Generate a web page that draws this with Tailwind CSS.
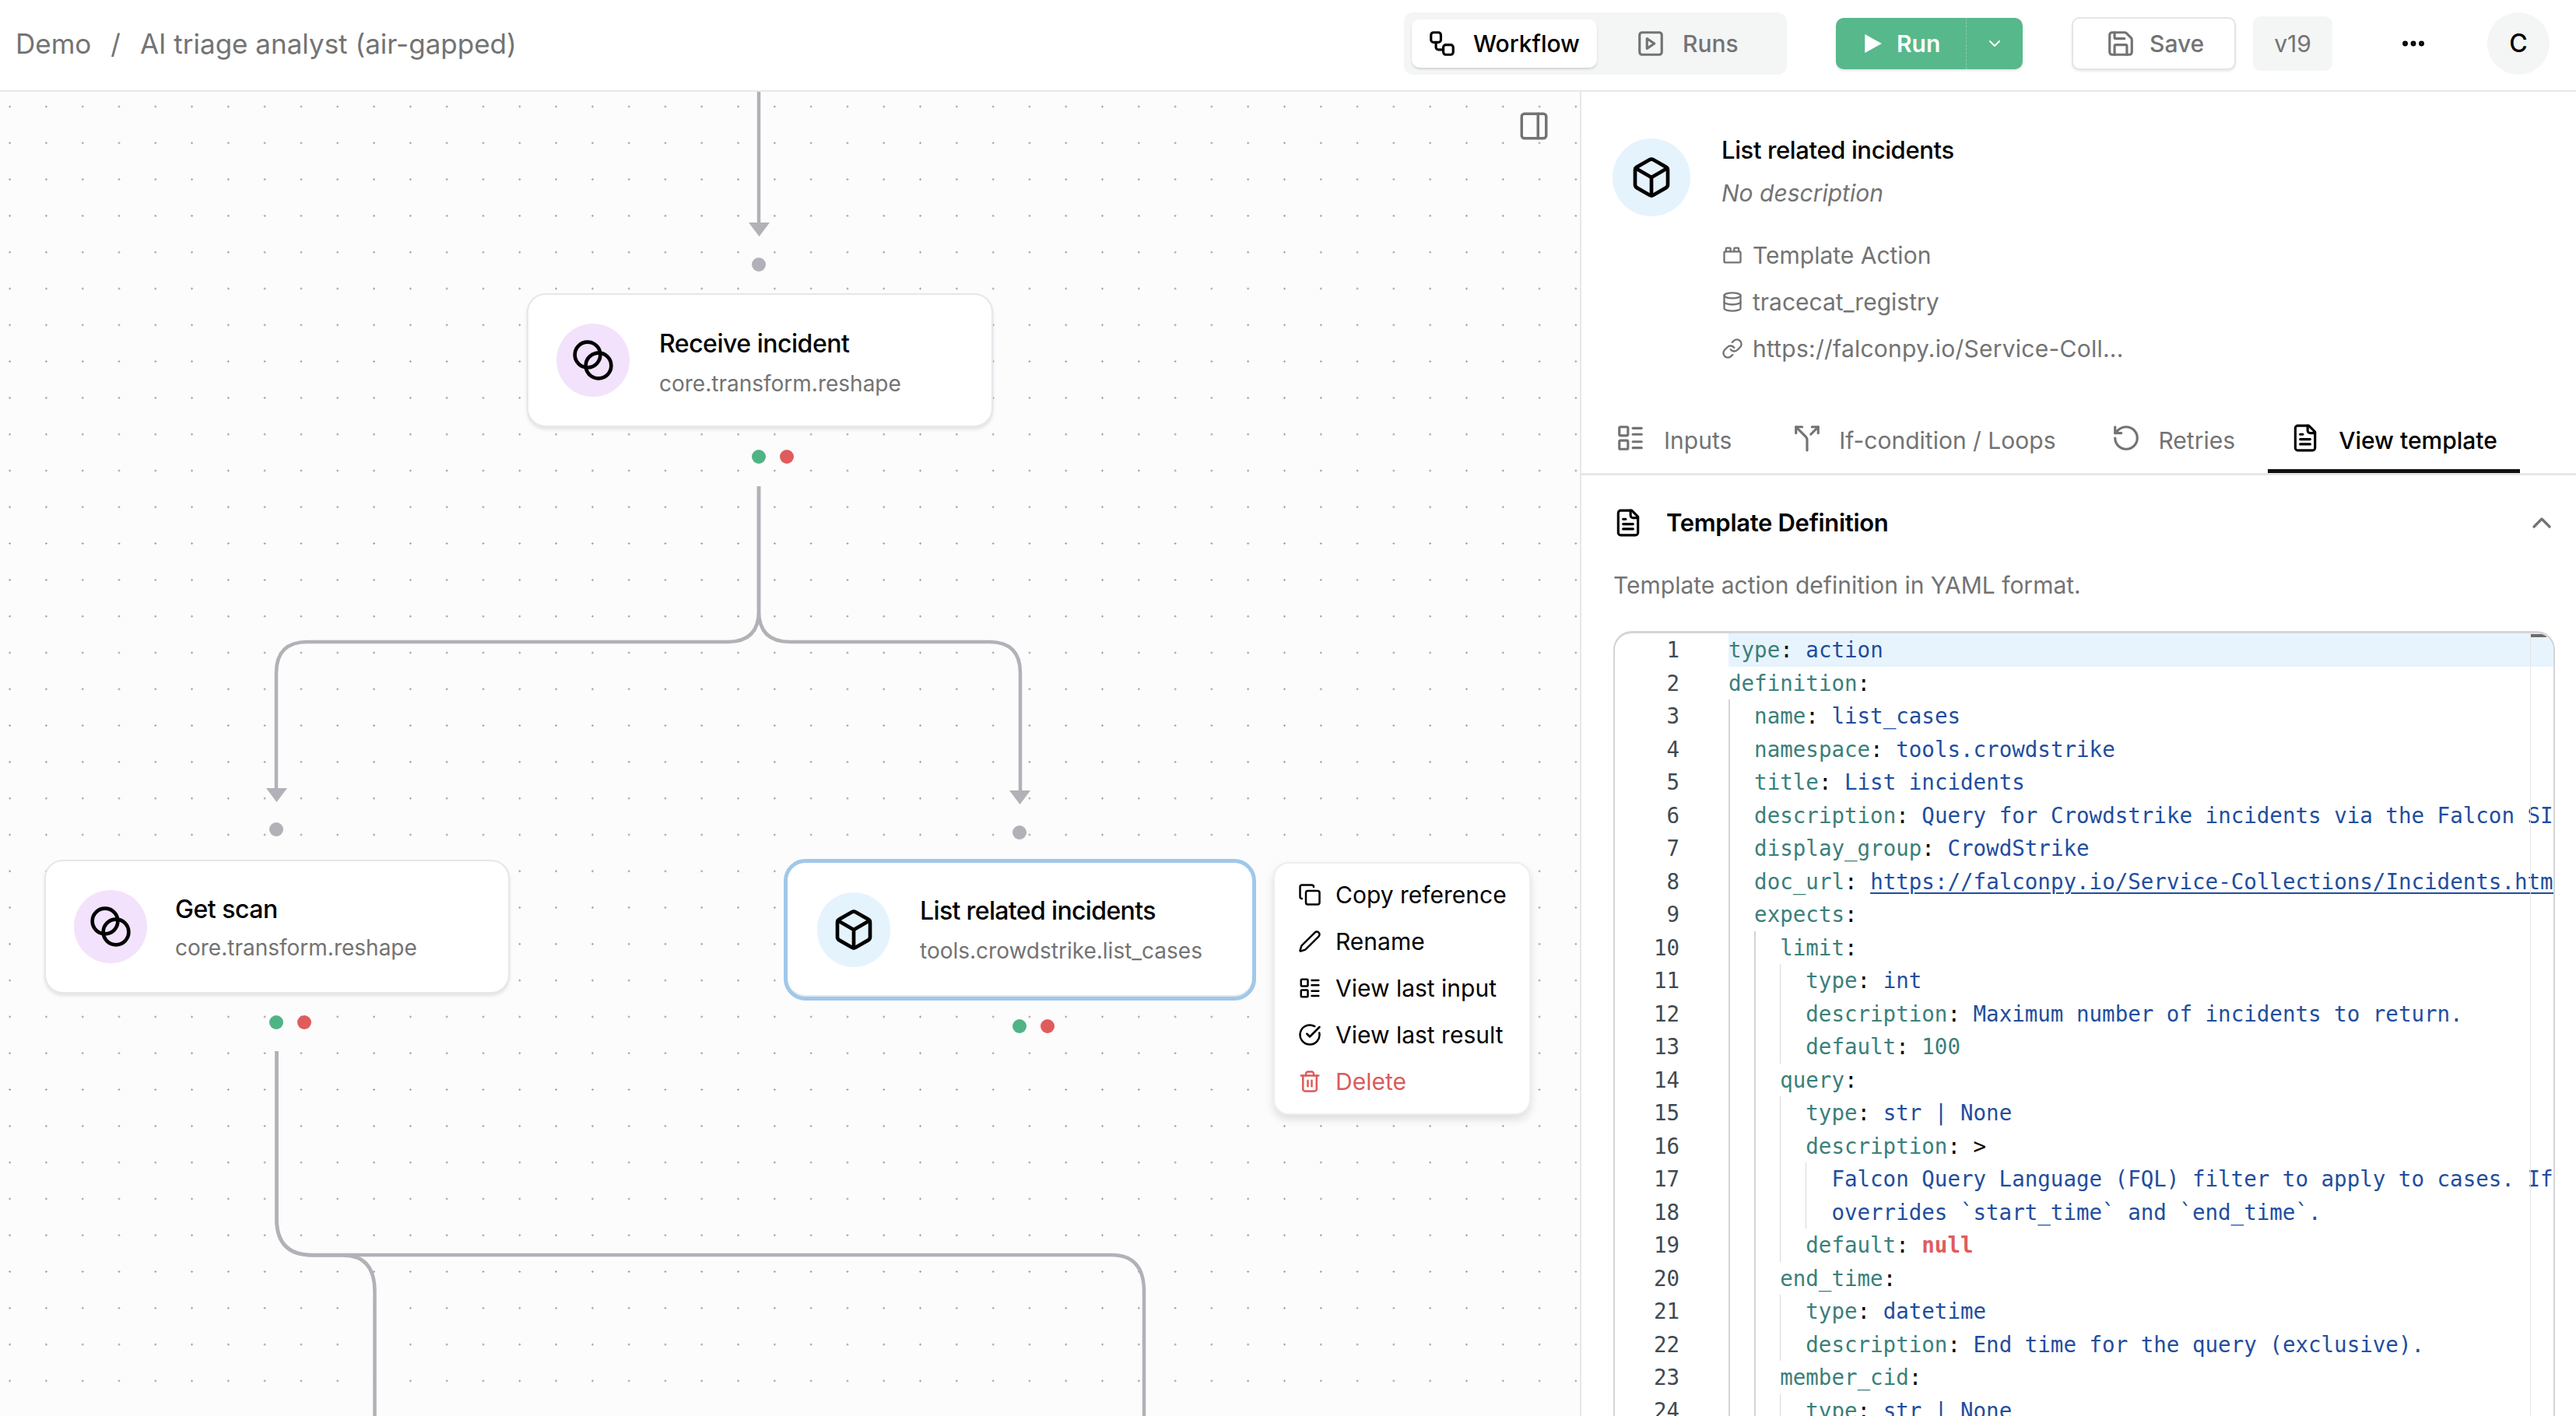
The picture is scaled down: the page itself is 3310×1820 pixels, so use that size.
<!doctype html>
<html>
<head>
<meta charset="utf-8">
<script src="https://cdn.jsdelivr.net/npm/@tailwindcss/browser@4"></script>
</head>
<body class="w-[3310px] h-[1820px] overflow-hidden bg-white font-['Inter',sans-serif] text-black">
<header class="h-[118px] border-b-2 border-[#e5e7eb] flex items-center pl-[20px] pr-[34px] pb-[4px]">
  <nav class="flex items-center gap-[25px] text-[35px] text-[#737373]">
    <span>Demo</span><span>/</span><span>AI triage analyst (air-gapped)</span>
  </nav>
  <div class="ml-auto flex items-center">
    <div class="w-[492px] h-[80px] rounded-[12px] bg-[#f4f5f5] flex items-center px-[10px] text-[30px] font-medium">
      <div class="w-[238px] h-[62px] bg-white rounded-[10px] shadow-[0_2px_3px_rgba(0,0,0,0.14)] flex items-center pl-[20px] gap-[21px] text-black">
        <svg class="w-[38px] h-[38px]" viewBox="0 0 24 24" fill="none" stroke="currentColor" stroke-width="2" stroke-linecap="round" stroke-linejoin="round"><rect width="8" height="8" x="3" y="3" rx="2"/><path d="M7 11v4a2 2 0 0 0 2 2h4"/><rect width="8" height="8" x="13" y="13" rx="2"/></svg>
        <span>Workflow</span>
      </div>
      <div class="flex items-center pl-[50px] gap-[22px] text-[#737373]">
        <svg class="w-[38px] h-[38px]" viewBox="0 0 24 24" fill="none" stroke="currentColor" stroke-width="2" stroke-linecap="round" stroke-linejoin="round"><rect width="18" height="18" x="3" y="3" rx="2"/><path d="m9 8 6 4-6 4Z"/></svg>
        <span>Runs</span>
      </div>
    </div>
    <div class="ml-[63px] w-[240px] h-[66px] rounded-[10px] bg-[#57b88b] flex items-center text-white text-[30px] font-semibold shadow-[0_2px_3px_rgba(0,0,0,0.1)]">
      <div class="w-[168px] h-full flex items-center pl-[34px] gap-[18px] border-r border-dashed border-white/30">
        <svg class="w-[26px] h-[30px]" viewBox="0 0 24 24" fill="currentColor"><path d="M3 1 23 12 3 23Z"/></svg>
        <span>Run</span>
      </div>
      <div class="flex-1 flex justify-center">
        <svg class="w-[24px] h-[24px]" viewBox="0 0 24 24" fill="none" stroke="currentColor" stroke-width="2" stroke-linecap="round" stroke-linejoin="round"><path d="m6 9 6 6 6-6"/></svg>
      </div>
    </div>
    <div class="ml-[63px] w-[211px] h-[68px] rounded-[10px] bg-white border-2 border-[#e5e5e5] shadow-[0_2px_3px_rgba(0,0,0,0.08)] flex items-center pl-[42px] gap-[18px] text-[30px] font-medium text-[#737373]">
      <svg class="w-[38px] h-[38px]" viewBox="0 0 24 24" fill="none" stroke="currentColor" stroke-width="2" stroke-linecap="round" stroke-linejoin="round"><path d="M15.2 3a2 2 0 0 1 1.4.6l3.8 3.8a2 2 0 0 1 .6 1.4V19a2 2 0 0 1-2 2H5a2 2 0 0 1-2-2V5a2 2 0 0 1 2-2z"/><path d="M17 21v-7a1 1 0 0 0-1-1H8a1 1 0 0 0-1 1v7"/><path d="M7 3v4a1 1 0 0 0 1 1h7"/></svg>
      <span>Save</span>
    </div>
    <div class="ml-[22px] w-[102px] h-[70px] rounded-[10px] bg-[#f4f5f5] flex items-center justify-center text-[30px] text-[#737373]">v19</div>
    <div class="ml-[86px] w-[36px] flex justify-center">
      <svg class="w-[36px] h-[36px]" viewBox="0 0 24 24" fill="none" stroke="currentColor" stroke-width="2.6" stroke-linecap="round" stroke-linejoin="round"><circle cx="12" cy="12" r="1"/><circle cx="19" cy="12" r="1"/><circle cx="5" cy="12" r="1"/></svg>
    </div>
    <div class="ml-[77px] w-[80px] h-[80px] rounded-full bg-[#f4f5f5] flex items-center justify-center text-[32px] font-medium">C</div>
  </div>
</header>
<main class="flex h-[1702px]">
  <section class="relative w-[2030px] h-full overflow-hidden bg-[#fcfcfc] bg-[radial-gradient(circle,#a0a0a0_1px,transparent_1.4px)] bg-[size:46.8px_46.8px] bg-[position:-10.8px_-4.4px]">
    <svg class="absolute left-0 top-0 w-[2030px] h-[1702px]" viewBox="0 118 2030 1702" fill="none" stroke="#b1b1b7" stroke-width="4.500">
      <path d="M975 118V292"/>
      <path d="M975 625V785Q975 825 935 825H395Q355 825 355 865V1020"/>
      <path d="M975 625V785Q975 825 1015 825H1271Q1311 825 1311 865V1024"/>
      <path d="M355.500 1351V1567Q355.500 1613 401 1613H1428Q1470 1613 1470 1660V1820"/>
      <path d="M355.500 1351V1567Q355.500 1613 401 1613.500H441Q481.500 1613.500 481.500 1660V1820"/>
      <path d="M962 286H989L975.500 304Z" fill="#b1b1b7" stroke="none"/>
      <path d="M342 1013H369L355.500 1031Z" fill="#b1b1b7" stroke="none"/>
      <path d="M1297 1016H1324L1310.500 1034Z" fill="#b1b1b7" stroke="none"/>
    </svg>

    <button class="absolute left-[1950px] top-[23px] text-[#737373]">
      <svg class="w-[42px] h-[42px]" viewBox="0 0 24 24" fill="none" stroke="currentColor" stroke-width="2" stroke-linecap="round" stroke-linejoin="round"><rect width="18" height="18" x="3" y="3" rx="2"/><path d="M15 3v18"/></svg>
    </button>

    <span class="absolute left-[966px] top-[213px] w-[18px] h-[18px] rounded-full bg-[#b1b1b7]"></span>
    <article class="absolute left-[677px] top-[259px] w-[599px] h-[172px] rounded-[24px] bg-white border-2 border-[#e5e7eb] shadow-[0_3px_4px_rgba(0,0,0,0.1)] flex items-center pl-[36px] gap-[38px]">
      <div class="w-[94px] h-[94px] rounded-full bg-[#f3e2fc] flex items-center justify-center shrink-0">
        <svg class="w-[56px] h-[56px]" viewBox="0 0 24 24" fill="none" stroke="currentColor" stroke-width="2" stroke-linecap="round" stroke-linejoin="round"><circle cx="9" cy="9" r="7"/><circle cx="15" cy="15" r="7"/></svg>
      </div>
      <div class="flex flex-col gap-[14px] pt-[8px]">
        <div class="text-[32px] leading-[38px] font-medium tracking-[-0.015em]">Receive incident</div>
        <div class="text-[28px] leading-[36px] text-[#737373]">core.transform.reshape</div>
      </div>
    </article>
    <span class="absolute left-[966px] top-[460px] w-[18px] h-[18px] rounded-full bg-[#50b386]"></span>
    <span class="absolute left-[1002px] top-[460px] w-[18px] h-[18px] rounded-full bg-[#e05c5c]"></span>

    <span class="absolute left-[346px] top-[939px] w-[18px] h-[18px] rounded-full bg-[#b1b1b7]"></span>
    <article class="absolute left-[57px] top-[987px] w-[598px] h-[172px] rounded-[24px] bg-white border-2 border-[#e5e7eb] shadow-[0_3px_4px_rgba(0,0,0,0.1)] flex items-center pl-[36px] gap-[36px]">
      <div class="w-[94px] h-[94px] rounded-full bg-[#f3e2fc] flex items-center justify-center shrink-0">
        <svg class="w-[56px] h-[56px]" viewBox="0 0 24 24" fill="none" stroke="currentColor" stroke-width="2" stroke-linecap="round" stroke-linejoin="round"><circle cx="9" cy="9" r="7"/><circle cx="15" cy="15" r="7"/></svg>
      </div>
      <div class="flex flex-col gap-[12px] pt-[4px]">
        <div class="text-[32px] leading-[38px] font-medium tracking-[-0.015em]">Get scan</div>
        <div class="text-[28px] leading-[36px] text-[#737373]">core.transform.reshape</div>
      </div>
    </article>
    <span class="absolute left-[346px] top-[1187px] w-[18px] h-[18px] rounded-full bg-[#50b386]"></span>
    <span class="absolute left-[382px] top-[1187px] w-[18px] h-[18px] rounded-full bg-[#e05c5c]"></span>

    <span class="absolute left-[1301px] top-[943px] w-[18px] h-[18px] rounded-full bg-[#b1b1b7]"></span>
    <article class="absolute left-[1007px] top-[986px] w-[607px] h-[182px] rounded-[28px] bg-white border-[5px] border-[#a0c8ea] shadow-[inset_0_-2px_0_#e5e7eb] flex items-center pl-[38px] gap-[38px]">
      <div class="w-[94px] h-[96px] rounded-full bg-[#e5f3fd] flex items-center justify-center shrink-0">
        <svg class="w-[56px] h-[56px]" viewBox="0 0 24 24" fill="none" stroke="currentColor" stroke-width="2" stroke-linecap="round" stroke-linejoin="round"><path d="M21 8a2 2 0 0 0-1-1.730l-7-4a2 2 0 0 0-2 0l-7 4A2 2 0 0 0 3 8v8a2 2 0 0 0 1 1.730l7 4a2 2 0 0 0 2 0l7-4A2 2 0 0 0 21 16Z"/><path d="M3.300 7 12 12l8.700-5"/><path d="M12 22V12"/></svg>
      </div>
      <div class="flex flex-col gap-[14px] pt-[2px]">
        <div class="text-[32px] leading-[38px] font-medium tracking-[-0.02em]">List related incidents</div>
        <div class="text-[28px] leading-[36px] text-[#737373]">tools.crowdstrike.list_cases</div>
      </div>
    </article>
    <span class="absolute left-[1301px] top-[1192px] w-[18px] h-[18px] rounded-full bg-[#50b386]"></span>
    <span class="absolute left-[1337px] top-[1192px] w-[18px] h-[18px] rounded-full bg-[#e05c5c]"></span>

    <div class="absolute left-[1636px] top-[990px] w-[331px] h-[325px] rounded-[20px] bg-white border-2 border-[#eceef1] shadow-[0_6px_12px_rgba(0,0,0,0.12)] pt-[10px] pb-[11px] pl-[30px] text-[30px] flex flex-col">
      <div class="h-[60px] flex items-center gap-[18px]">
        <svg class="w-[30px] h-[30px]" viewBox="0 0 24 24" fill="none" stroke="currentColor" stroke-width="2" stroke-linecap="round" stroke-linejoin="round"><rect width="14" height="14" x="8" y="8" rx="2"/><path d="M4 16c-1.100 0-2-.9-2-2V4c0-1.100.9-2 2-2h10c1.100 0 2 .9 2 2"/></svg>
        <span>Copy reference</span>
      </div>
      <div class="h-[60px] flex items-center gap-[18px]">
        <svg class="w-[30px] h-[30px]" viewBox="0 0 24 24" fill="none" stroke="currentColor" stroke-width="2" stroke-linecap="round" stroke-linejoin="round"><path d="M21.174 6.812a1 1 0 0 0-3.986-3.987L3.842 16.174a2 2 0 0 0-.5.83l-1.321 4.352a.5.5 0 0 0 .623.622l4.353-1.320a2 2 0 0 0 .83-.497z"/></svg>
        <span>Rename</span>
      </div>
      <div class="h-[60px] flex items-center gap-[18px]">
        <svg class="w-[30px] h-[30px]" viewBox="0 0 24 24" fill="none" stroke="currentColor" stroke-width="2" stroke-linecap="round" stroke-linejoin="round"><rect width="7" height="7" x="3" y="3" rx="1"/><rect width="7" height="7" x="3" y="14" rx="1"/><path d="M14 4h7"/><path d="M14 9h7"/><path d="M14 15h7"/><path d="M14 20h7"/></svg>
        <span>View last input</span>
      </div>
      <div class="h-[60px] flex items-center gap-[18px]">
        <svg class="w-[30px] h-[30px]" viewBox="0 0 24 24" fill="none" stroke="currentColor" stroke-width="2" stroke-linecap="round" stroke-linejoin="round"><path d="M21.801 10A10 10 0 1 1 17 3.335"/><path d="m9 11 3 3L22 4"/></svg>
        <span>View last result</span>
      </div>
      <div class="h-[60px] flex items-center gap-[18px] text-[#dc5a5a]">
        <svg class="w-[30px] h-[30px]" viewBox="0 0 24 24" fill="none" stroke="currentColor" stroke-width="2" stroke-linecap="round" stroke-linejoin="round"><path d="M3 6h18"/><path d="M19 6v14c0 1-1 2-2 2H7c-1 0-2-1-2-2V6"/><path d="M8 6V4c0-1 1-2 2-2h4c1 0 2 1 2 2v2"/><path d="M10 11v6"/><path d="M14 11v6"/></svg>
        <span>Delete</span>
      </div>
    </div>
  </section>

  <aside class="w-[1280px] h-full border-l-2 border-[#e5e7eb] bg-white overflow-hidden">
    <div class="flex pl-[40px] pt-[60px] gap-[40px] h-[340px]">
      <div class="w-[100px] h-[100px] rounded-full bg-[#e5f3fd] flex items-center justify-center shrink-0">
        <svg class="w-[56px] h-[56px]" viewBox="0 0 24 24" fill="none" stroke="currentColor" stroke-width="2" stroke-linecap="round" stroke-linejoin="round"><path d="M21 8a2 2 0 0 0-1-1.730l-7-4a2 2 0 0 0-2 0l-7 4A2 2 0 0 0 3 8v8a2 2 0 0 0 1 1.730l7 4a2 2 0 0 0 2 0l7-4A2 2 0 0 0 21 16Z"/><path d="M3.300 7 12 12l8.700-5"/><path d="M12 22V12"/></svg>
      </div>
      <div class="flex flex-col">
        <div class="h-[30px] flex items-center text-[31px] font-medium tracking-[-0.012em]">List related incidents</div>
        <div class="mt-[25px] h-[30px] flex items-center text-[30px] italic text-[#737373]">No description</div>
        <div class="mt-[50px] flex flex-col gap-[30px] text-[30px] text-[#737373]">
          <div class="h-[30px] flex items-center gap-[12px]">
            <svg class="w-[28px] h-[28px]" viewBox="0 0 24 24" fill="none" stroke="currentColor" stroke-width="2" stroke-linecap="round" stroke-linejoin="round"><rect width="18" height="12" x="3" y="8" rx="1"/><path d="M10 8V5c0-.6-.4-1-1-1H6a1 1 0 0 0-1 1v3"/><path d="M19 8V5c0-.6-.4-1-1-1h-3a1 1 0 0 0-1 1v3"/></svg>
            <span>Template Action</span>
          </div>
          <div class="h-[30px] flex items-center gap-[12px]">
            <svg class="w-[28px] h-[28px]" viewBox="0 0 24 24" fill="none" stroke="currentColor" stroke-width="2" stroke-linecap="round" stroke-linejoin="round"><ellipse cx="12" cy="5" rx="9" ry="3"/><path d="M3 5V19A9 3 0 0 0 21 19V5"/><path d="M3 12A9 3 0 0 0 21 12"/></svg>
            <span>tracecat_registry</span>
          </div>
          <div class="h-[30px] flex items-center gap-[12px]">
            <svg class="w-[28px] h-[28px]" viewBox="0 0 24 24" fill="none" stroke="currentColor" stroke-width="2" stroke-linecap="round" stroke-linejoin="round"><path d="M10 13a5 5 0 0 0 7.540.54l3-3a5 5 0 0 0-7.070-7.070l-1.720 1.710"/><path d="M14 11a5 5 0 0 0-7.540-.54l-3 3a5 5 0 0 0 7.070 7.070l1.710-1.710"/></svg>
            <span class="tracking-[0.008em]">https://falconpy.io/Service-Coll...</span>
          </div>
        </div>
      </div>
    </div>
    <nav class="h-[153px] border-b-[3px] border-[#e5e7eb] flex items-end text-[30px] text-[#737373]">
      <div class="h-[74px] pt-[10px] flex items-start ml-[44px] gap-[24px]">
        <svg class="w-[38px] h-[38px]" viewBox="0 0 24 24" fill="none" stroke="currentColor" stroke-width="2" stroke-linecap="round" stroke-linejoin="round"><rect width="7" height="7" x="3" y="3" rx="1"/><rect width="7" height="7" x="3" y="14" rx="1"/><path d="M14 4h7"/><path d="M14 9h7"/><path d="M14 15h7"/><path d="M14 20h7"/></svg>
        <span>Inputs</span>
      </div>
      <div class="h-[74px] pt-[10px] flex items-start ml-[78px] gap-[22px]">
        <svg class="w-[38px] h-[38px]" viewBox="0 0 24 24" fill="none" stroke="currentColor" stroke-width="2" stroke-linecap="round" stroke-linejoin="round"><path d="M16 3h5v5"/><path d="M8 3H3v5"/><path d="M12 22v-8.300a4 4 0 0 0-1.172-2.872L3 3"/><path d="m15 9 6-6"/></svg>
        <span>If-condition / Loops</span>
      </div>
      <div class="h-[74px] pt-[10px] flex items-start ml-[72px] gap-[22px]">
        <svg class="w-[38px] h-[38px]" viewBox="0 0 24 24" fill="none" stroke="currentColor" stroke-width="2" stroke-linecap="round" stroke-linejoin="round"><path d="M3 12a9 9 0 1 0 9-9 9.750 9.750 0 0 0-6.740 2.740L3 8"/><path d="M3 3v5h5"/></svg>
        <span>Retries</span>
      </div>
      <div class="w-[324px] h-[79px] pt-[15px] ml-[42px] flex items-start justify-center gap-[24px] text-black border-b-[5px] border-[#111111]">
        <svg class="w-[38px] h-[38px]" viewBox="0 0 24 24" fill="none" stroke="currentColor" stroke-width="2" stroke-linecap="round" stroke-linejoin="round"><path d="M15 2H6a2 2 0 0 0-2 2v16a2 2 0 0 0 2 2h12a2 2 0 0 0 2-2V7Z"/><path d="M14 2v4a2 2 0 0 0 2 2h4"/><path d="M10 9H8"/><path d="M16 13H8"/><path d="M16 17H8"/></svg>
        <span class="font-medium">View template</span>
      </div>
    </nav>
    <div class="pl-[41px] pr-[26px]">
      <div class="h-[122px] flex items-center">
        <svg class="w-[38px] h-[38px]" viewBox="0 0 24 24" fill="none" stroke="currentColor" stroke-width="2" stroke-linecap="round" stroke-linejoin="round"><path d="M15 2H6a2 2 0 0 0-2 2v16a2 2 0 0 0 2 2h12a2 2 0 0 0 2-2V7Z"/><path d="M14 2v4a2 2 0 0 0 2 2h4"/><path d="M10 9H8"/><path d="M16 13H8"/><path d="M16 17H8"/></svg>
        <span class="ml-[30px] text-[31px] font-semibold tracking-[-0.01em]">Template Definition</span>
        <svg class="ml-auto mr-[-2px] w-[40px] h-[40px] text-[#737373]" viewBox="0 0 24 24" fill="none" stroke="currentColor" stroke-width="2" stroke-linecap="round" stroke-linejoin="round"><path d="m18 15-6-6-6 6"/></svg>
      </div>
      <p class="h-[36px] mt-[1px] flex items-center text-[30px] text-[#737373]">Template action definition in YAML format.</p>
      <div class="relative mt-[41px] h-[1100px] w-[1210px] rounded-t-[24px] border-t-[3px] border-x-2 border-[#d4d4d8] flex overflow-hidden font-['DejaVu_Sans_Mono',monospace] text-[27.500px] leading-[42.500px]">
        <div class="w-[83px] shrink-0 text-right text-[#3f4a52]">
          <div>1</div><div>2</div><div>3</div><div>4</div><div>5</div><div>6</div><div>7</div><div>8</div><div>9</div><div>10</div><div>11</div><div>12</div><div>13</div><div>14</div><div>15</div><div>16</div><div>17</div><div>18</div><div>19</div><div>20</div><div>21</div><div>22</div><div>23</div><div>24</div>
        </div>
        <div class="ml-[63px] flex-1 min-w-0 flex flex-col whitespace-pre overflow-hidden text-[#1f4e9e]">
          <div class="flex h-[42.500px] shrink-0 bg-[#e7f4fd]"><span><span class="text-[#3b7f7a]">type</span><span class="text-black">:</span> action</span></div>
          <div class="flex h-[42.500px] shrink-0"><span><span class="text-[#3b7f7a]">definition</span><span class="text-black">:</span></span></div>
          <div class="flex h-[42.500px] shrink-0"><i class="w-[33.100px] shrink-0 border-l-2 border-[#d4d4d8]"></i><span><span class="text-[#3b7f7a]">name</span><span class="text-black">:</span> list_cases</span></div>
          <div class="flex h-[42.500px] shrink-0"><i class="w-[33.100px] shrink-0 border-l-2 border-[#d4d4d8]"></i><span><span class="text-[#3b7f7a]">namespace</span><span class="text-black">:</span> tools.crowdstrike</span></div>
          <div class="flex h-[42.500px] shrink-0"><i class="w-[33.100px] shrink-0 border-l-2 border-[#d4d4d8]"></i><span><span class="text-[#3b7f7a]">title</span><span class="text-black">:</span> List incidents</span></div>
          <div class="flex h-[42.500px] shrink-0"><i class="w-[33.100px] shrink-0 border-l-2 border-[#d4d4d8]"></i><span><span class="text-[#3b7f7a]">description</span><span class="text-black">:</span> Query for Crowdstrike incidents via the Falcon SIEM.</span></div>
          <div class="flex h-[42.500px] shrink-0"><i class="w-[33.100px] shrink-0 border-l-2 border-[#d4d4d8]"></i><span><span class="text-[#3b7f7a]">display_group</span><span class="text-black">:</span> CrowdStrike</span></div>
          <div class="flex h-[42.500px] shrink-0"><i class="w-[33.100px] shrink-0 border-l-2 border-[#d4d4d8]"></i><span><span class="text-[#3b7f7a]">doc_url</span><span class="text-black">:</span> <span class="underline decoration-2 underline-offset-[4px]">https://falconpy.io/Service-Collections/Incidents.html</span></span></div>
          <div class="flex h-[42.500px] shrink-0"><i class="w-[33.100px] shrink-0 border-l-2 border-[#d4d4d8]"></i><span><span class="text-[#3b7f7a]">expects</span><span class="text-black">:</span></span></div>
          <div class="flex h-[42.500px] shrink-0"><i class="w-[33.100px] shrink-0 border-l-2 border-[#d4d4d8]"></i><i class="w-[33.100px] shrink-0 border-l-2 border-[#d4d4d8]"></i><span><span class="text-[#3b7f7a]">limit</span><span class="text-black">:</span></span></div>
          <div class="flex h-[42.500px] shrink-0"><i class="w-[33.100px] shrink-0 border-l-2 border-[#d4d4d8]"></i><i class="w-[33.100px] shrink-0 border-l-2 border-[#d4d4d8]"></i><i class="w-[33.100px] shrink-0 border-l border-[#d9d9d9]"></i><span><span class="text-[#3b7f7a]">type</span><span class="text-black">:</span> int</span></div>
          <div class="flex h-[42.500px] shrink-0"><i class="w-[33.100px] shrink-0 border-l-2 border-[#d4d4d8]"></i><i class="w-[33.100px] shrink-0 border-l-2 border-[#d4d4d8]"></i><i class="w-[33.100px] shrink-0 border-l border-[#d9d9d9]"></i><span><span class="text-[#3b7f7a]">description</span><span class="text-black">:</span> Maximum number of incidents to return.</span></div>
          <div class="flex h-[42.500px] shrink-0"><i class="w-[33.100px] shrink-0 border-l-2 border-[#d4d4d8]"></i><i class="w-[33.100px] shrink-0 border-l-2 border-[#d4d4d8]"></i><i class="w-[33.100px] shrink-0 border-l border-[#d9d9d9]"></i><span><span class="text-[#3b7f7a]">default</span><span class="text-black">:</span> <span class="text-[#3b7f7a]">100</span></span></div>
          <div class="flex h-[42.500px] shrink-0"><i class="w-[33.100px] shrink-0 border-l-2 border-[#d4d4d8]"></i><i class="w-[33.100px] shrink-0 border-l-2 border-[#d4d4d8]"></i><span><span class="text-[#3b7f7a]">query</span><span class="text-black">:</span></span></div>
          <div class="flex h-[42.500px] shrink-0"><i class="w-[33.100px] shrink-0 border-l-2 border-[#d4d4d8]"></i><i class="w-[33.100px] shrink-0 border-l-2 border-[#d4d4d8]"></i><i class="w-[33.100px] shrink-0 border-l border-[#d9d9d9]"></i><span><span class="text-[#3b7f7a]">type</span><span class="text-black">:</span> str | None</span></div>
          <div class="flex h-[42.500px] shrink-0"><i class="w-[33.100px] shrink-0 border-l-2 border-[#d4d4d8]"></i><i class="w-[33.100px] shrink-0 border-l-2 border-[#d4d4d8]"></i><i class="w-[33.100px] shrink-0 border-l border-[#d9d9d9]"></i><span><span class="text-[#3b7f7a]">description</span><span class="text-black">: &gt;</span></span></div>
          <div class="flex h-[42.500px] shrink-0"><i class="w-[33.100px] shrink-0 border-l-2 border-[#d4d4d8]"></i><i class="w-[33.100px] shrink-0 border-l-2 border-[#d4d4d8]"></i><i class="w-[33.100px] shrink-0 border-l border-[#d9d9d9]"></i><i class="w-[33.100px] shrink-0 border-l border-[#d9d9d9]"></i><span>Falcon Query Language (FQL) filter to apply to cases. If provided,</span></div>
          <div class="flex h-[42.500px] shrink-0"><i class="w-[33.100px] shrink-0 border-l-2 border-[#d4d4d8]"></i><i class="w-[33.100px] shrink-0 border-l-2 border-[#d4d4d8]"></i><i class="w-[33.100px] shrink-0 border-l border-[#d9d9d9]"></i><i class="w-[33.100px] shrink-0 border-l border-[#d9d9d9]"></i><span>overrides `start_time` and `end_time`.</span></div>
          <div class="flex h-[42.500px] shrink-0"><i class="w-[33.100px] shrink-0 border-l-2 border-[#d4d4d8]"></i><i class="w-[33.100px] shrink-0 border-l-2 border-[#d4d4d8]"></i><i class="w-[33.100px] shrink-0 border-l border-[#d9d9d9]"></i><span><span class="text-[#3b7f7a]">default</span><span class="text-black">:</span> <span class="text-[#e05c5c] font-bold">null</span></span></div>
          <div class="flex h-[42.500px] shrink-0"><i class="w-[33.100px] shrink-0 border-l-2 border-[#d4d4d8]"></i><i class="w-[33.100px] shrink-0 border-l-2 border-[#d4d4d8]"></i><span><span class="text-[#3b7f7a]">end_time</span><span class="text-black">:</span></span></div>
          <div class="flex h-[42.500px] shrink-0"><i class="w-[33.100px] shrink-0 border-l-2 border-[#d4d4d8]"></i><i class="w-[33.100px] shrink-0 border-l-2 border-[#d4d4d8]"></i><i class="w-[33.100px] shrink-0 border-l border-[#d9d9d9]"></i><span><span class="text-[#3b7f7a]">type</span><span class="text-black">:</span> datetime</span></div>
          <div class="flex h-[42.500px] shrink-0"><i class="w-[33.100px] shrink-0 border-l-2 border-[#d4d4d8]"></i><i class="w-[33.100px] shrink-0 border-l-2 border-[#d4d4d8]"></i><i class="w-[33.100px] shrink-0 border-l border-[#d9d9d9]"></i><span><span class="text-[#3b7f7a]">description</span><span class="text-black">:</span> End time for the query (exclusive).</span></div>
          <div class="flex h-[42.500px] shrink-0"><i class="w-[33.100px] shrink-0 border-l-2 border-[#d4d4d8]"></i><i class="w-[33.100px] shrink-0 border-l-2 border-[#d4d4d8]"></i><span><span class="text-[#3b7f7a]">member_cid</span><span class="text-black">:</span></span></div>
          <div class="flex h-[42.500px] shrink-0"><i class="w-[33.100px] shrink-0 border-l-2 border-[#d4d4d8]"></i><i class="w-[33.100px] shrink-0 border-l-2 border-[#d4d4d8]"></i><i class="w-[33.100px] shrink-0 border-l border-[#d9d9d9]"></i><span><span class="text-[#3b7f7a]">type</span><span class="text-black">:</span> str | None</span></div>
        </div>
        <span class="absolute right-[29px] top-0 bottom-0 w-[1px] bg-[#e5e5e5]"></span>
        <span class="absolute right-[9px] top-[1px] w-[20px] h-[4px] bg-[#6b6b6b]"></span>
      </div>
    </div>
  </aside>
</main>
</body>
</html>
